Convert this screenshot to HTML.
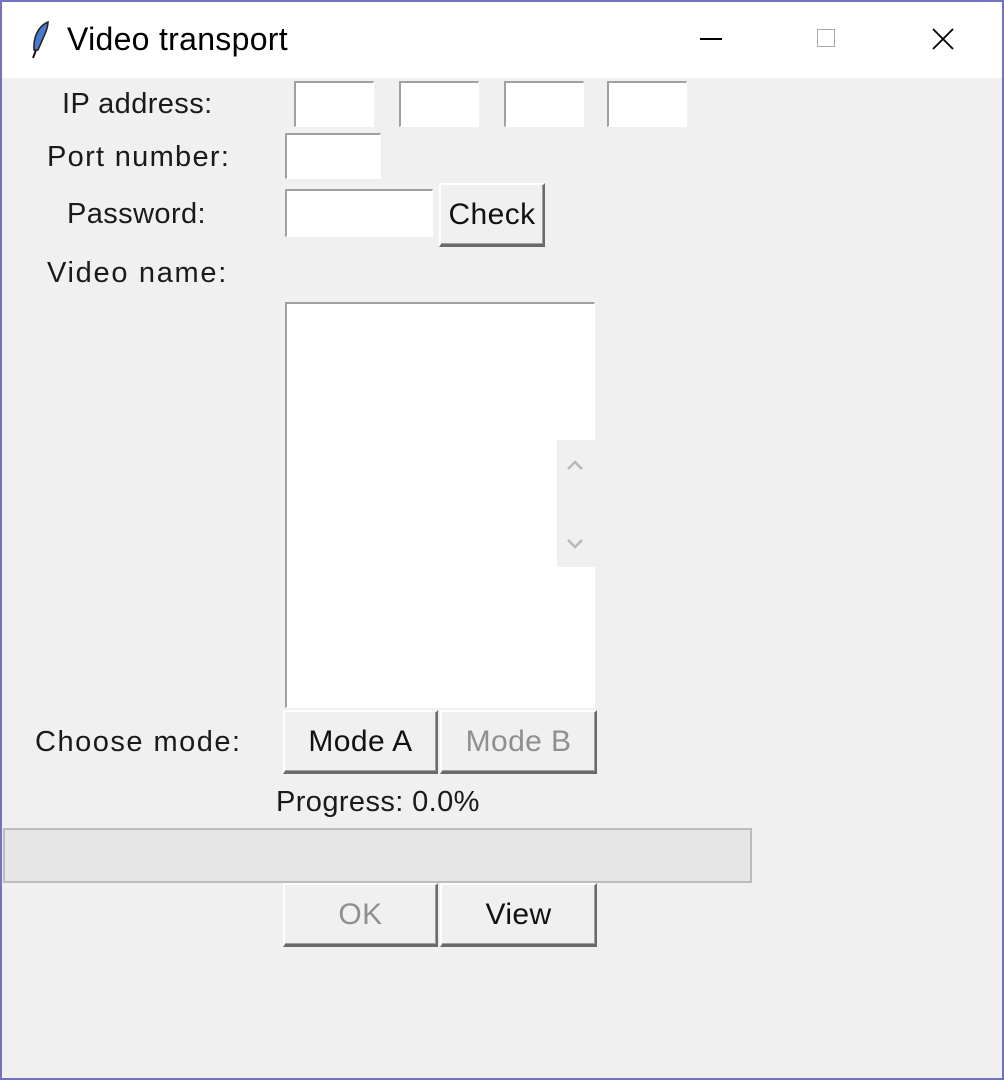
<!DOCTYPE html>
<html><head><style>
*{margin:0;padding:0;box-sizing:border-box}
body{width:1004px;height:1080px;background:#f0f0f0;font-family:"Liberation Sans",sans-serif;position:relative;overflow:hidden}
.frame{position:absolute;left:0;top:0;width:1004px;height:1080px;border:2px solid #7272c2;z-index:10;pointer-events:none}
.title{position:absolute;left:0;top:0;width:1004px;height:78px;background:#fff}
.a{position:absolute}
.lbl{position:absolute;font-size:29px;letter-spacing:0.4px;color:#1a1a1a;white-space:nowrap}
.ent{position:absolute;background:#fff;border-top:2px solid #a0a0a0;border-left:2px solid #a0a0a0;border-right:1px solid #fff;border-bottom:1px solid #fff}
.btn{position:absolute;background:#f0f0f0;border-top:2px solid #fff;border-left:2px solid #fff;border-right:2px solid #6a6a6a;border-bottom:3px solid #6a6a6a;box-shadow:inset -1px -1px 0 #a0a0a0;font-size:30px;letter-spacing:0.4px;color:#111;display:flex;align-items:center;justify-content:center}
.dis{color:#8f8f8f}
</style></head><body>
<div class="frame"></div>
<div class="title"></div>
<svg class="a" style="left:28px;top:20px" width="26" height="40" viewBox="0 0 26 40"><path d="M20 2 C10 6 5 18 6 30 L10 30 C14 20 20 10 20 2Z" fill="#4a7ad0" stroke="#222" stroke-width="1.5"/><path d="M8 30 L5 38" stroke="#111" stroke-width="2"/></svg>
<div class="lbl" style="left:67px;top:21px;font-size:32px;letter-spacing:0.3px;color:#000">Video transport</div>
<div class="a" style="left:700px;top:38px;width:22px;height:2px;background:#000"></div>
<div class="a" style="left:817px;top:29px;width:18px;height:18px;border:1px solid #aaa"></div>
<svg class="a" style="left:932px;top:28px" width="22" height="22"><path d="M1 1L21 21M21 1L1 21" stroke="#000" stroke-width="1.8"/></svg>

<div class="lbl" style="left:62px;top:88px">IP address:</div>
<div class="ent" style="left:294px;top:81px;width:80px;height:46px"></div>
<div class="ent" style="left:399px;top:81px;width:80px;height:46px"></div>
<div class="ent" style="left:504px;top:81px;width:80px;height:46px"></div>
<div class="ent" style="left:607px;top:81px;width:80px;height:46px"></div>

<div class="lbl" style="left:47px;top:141px;letter-spacing:1.3px">Port number:</div>
<div class="ent" style="left:285px;top:133px;width:96px;height:46px"></div>

<div class="lbl" style="left:67px;top:198px">Password:</div>
<div class="ent" style="left:285px;top:189px;width:148px;height:48px"></div>
<div class="btn" style="left:439px;top:183px;width:106px;height:64px">Check</div>

<div class="lbl" style="left:47px;top:257px;letter-spacing:1.7px">Video name:</div>
<div class="ent" style="left:285px;top:302px;width:310px;height:406px"></div>
<div class="a" style="left:557px;top:440px;width:38px;height:127px;background:#f0f0f0"></div>
<svg class="a" style="left:565px;top:455px" width="20" height="100"><path d="M3 14L10 7L17 14M3 85L10 92L17 85" fill="none" stroke="#b8b8b8" stroke-width="2.5"/></svg>

<div class="lbl" style="left:35px;top:726px;letter-spacing:1.5px">Choose mode:</div>
<div class="btn" style="left:283px;top:710px;width:155px;height:64px">Mode A</div>
<div class="btn dis" style="left:440px;top:710px;width:157px;height:64px">Mode B</div>

<div class="lbl" style="left:276px;top:786px">Progress: 0.0%</div>
<div class="a" style="left:3px;top:828px;width:749px;height:55px;background:#e6e6e6;border:2px solid #bcbcbc"></div>

<div class="btn dis" style="left:283px;top:883px;width:155px;height:64px">OK</div>
<div class="btn" style="left:440px;top:883px;width:157px;height:64px">View</div>
</body></html>
